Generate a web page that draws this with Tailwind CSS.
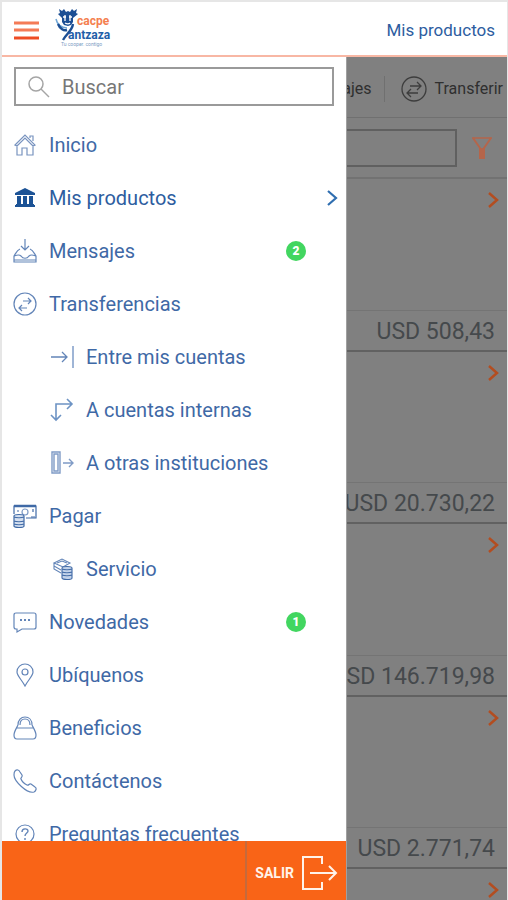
<!DOCTYPE html>
<html lang="es">

<head>
  <meta charset="utf-8">
  <meta name="viewport" content="width=device-width, initial-scale=1">
  <script src="https://cdn.jsdelivr.net/npm/@tailwindcss/browser@4"></script>
  <title>Mis productos</title>
</head>

<body class="font-[Roboto,sans-serif] bg-white">
  <div class="h-screen flex flex-col overflow-hidden border-t-2 border-l-2 border-r border-[#e6e6e6]">

    <header class="shrink-0 h-[55px] flex items-center justify-between pl-3 pr-3 border-b-2 border-[#f8b7a4]">
      <div class="flex items-center gap-4">
        <button type="button" aria-label="Menú" class="pt-1">
          <svg class="w-[25px] h-5" viewBox="0 0 25 20" fill="none" stroke-width="3">
            <path stroke="#f47b57" d="M0 2h25M0 9h25" />
            <path stroke="#ee4d25" d="M0 17h25" />
          </svg>
        </button>
        <svg class="w-[58px] h-10" viewBox="0 0 58 40" role="img" aria-label="CACPE Yantzaza">
          <path fill="#1c4f94" d="M4 0l3 2 2-2 2 3 2-1 2 1 2-3 2 2 3-2-1 4 2 1-5 4v4l-2 3-3 1-4-1-2-3V9L3 5l2-1z" />
          <path stroke="#fff" stroke-width="1.3" fill="none" d="M10 6v6M15 6v6M8 8h3M14 8h3M10 14c2 1 4 1 5 0" />
          <path stroke="#6fa5d5" stroke-width="1.5" fill="none" d="M1 10c1 5 5 9 11 9" />
          <path stroke="#1c4f94" stroke-width="2.4" fill="none" d="M18 15c-1 7-6 9-10 16M3 15c2 5 6 7 9 6" />
          <text x="22" y="16" font-size="12" font-weight="700" fill="#f4804f">cacpe</text>
          <text x="13" y="30" font-size="12" font-weight="700" fill="#1f5ea8">antzaza</text>
          <text x="6" y="37" font-size="5" fill="#7d9cc4">Tu cooper. contigo</text>
        </svg>
      </div>
      <h1 class="pt-1 text-[17px] text-[#2d5d9f]">Mis productos</h1>
    </header>

    <div class="relative flex-1 min-h-0 overflow-hidden">

      <!-- productos, detrás del menú -->
      <main class="h-full overflow-hidden bg-[#808080]">
        <div class="h-[61px] flex items-center justify-end pt-1 pr-1 text-base text-[#2f2f2f] border-b border-[#707070]">
          <a href="#" class="pr-3">Mensajes</a>
          <a href="#" class="flex items-center gap-2 pl-4 border-l border-[#707070]">
            <svg class="w-[26px] h-[26px]" viewBox="0 0 26 26" fill="none" stroke="#3d3d3d" stroke-width="1.3">
              <circle cx="13" cy="13" r="12" />
              <path d="M9 10h11M16 6l4 4-4 4M17 17H6M10 13l-4 4 4 4" />
            </svg>
            Transferir
          </a>
        </div>
        <div class="h-[61px] flex items-center gap-3 pl-3 pr-3 border-b-2 border-[#727272]">
          <input type="text" aria-label="Filtrar productos" class="flex-1 min-w-0 h-[38px] px-3 border-2 border-[#606060]">
          <button type="button" aria-label="Filtro" class="w-[26px] flex justify-center">
            <svg class="w-5 h-[22px]" viewBox="0 0 20 22" fill="none" stroke="#b5654a" stroke-width="2">
              <path d="M0 1h20" stroke-width="1.5" />
              <path d="M1 1l7 10v10h4V11l7-10" />
              <path d="M10 11v10" />
            </svg>
          </button>
        </div>

        <article class="h-[173px] flex flex-col justify-between border-b-2 border-[#616161]">
          <a href="#" aria-label="Ver cuenta" class="self-end pt-3 pr-2">
            <svg class="w-3 h-[18px]" viewBox="0 0 12 18" fill="none" stroke="#b34d20" stroke-width="2.5"><path d="M2 2l8 7-8 7" /></svg>
          </a>
          <p class="h-10 flex items-center justify-end pt-1 pr-3 border-t border-[#747474] text-[23px] text-[#45494c]">USD 508,43</p>
        </article>
        <article class="h-[172px] flex flex-col justify-between border-b-2 border-[#616161]">
          <a href="#" aria-label="Ver cuenta" class="self-end pt-3 pr-2">
            <svg class="w-3 h-[18px]" viewBox="0 0 12 18" fill="none" stroke="#b34d20" stroke-width="2.5"><path d="M2 2l8 7-8 7" /></svg>
          </a>
          <p class="h-10 flex items-center justify-end pt-1 pr-3 border-t border-[#747474] text-[23px] text-[#45494c]">USD 20.730,22</p>
        </article>
        <article class="h-[173px] flex flex-col justify-between border-b-2 border-[#616161]">
          <a href="#" aria-label="Ver cuenta" class="self-end pt-3 pr-2">
            <svg class="w-3 h-[18px]" viewBox="0 0 12 18" fill="none" stroke="#b34d20" stroke-width="2.5"><path d="M2 2l8 7-8 7" /></svg>
          </a>
          <p class="h-10 flex items-center justify-end pt-1 pr-3 border-t border-[#747474] text-[23px] text-[#45494c]">USD 146.719,98</p>
        </article>
        <article class="h-[172px] flex flex-col justify-between border-b-2 border-[#616161]">
          <a href="#" aria-label="Ver cuenta" class="self-end pt-3 pr-2">
            <svg class="w-3 h-[18px]" viewBox="0 0 12 18" fill="none" stroke="#b34d20" stroke-width="2.5"><path d="M2 2l8 7-8 7" /></svg>
          </a>
          <p class="h-10 flex items-center justify-end pt-1 pr-3 border-t border-[#747474] text-[23px] text-[#45494c]">USD 2.771,74</p>
        </article>
        <article class="h-[173px] flex flex-col">
          <a href="#" aria-label="Ver cuenta" class="self-end pt-3 pr-2">
            <svg class="w-3 h-[18px]" viewBox="0 0 12 18" fill="none" stroke="#b34d20" stroke-width="2.5"><path d="M2 2l8 7-8 7" /></svg>
          </a>
        </article>
      </main>

      <!-- menú lateral -->
      <aside class="absolute inset-y-0 left-0 w-[345px] max-w-full flex flex-col bg-white border-r border-[#a0a0a0]">
        <div class="shrink-0 px-3 pt-[10px] pb-3">
          <label class="h-[39px] flex items-center gap-3 pl-3 border-2 border-[#9a9a9a]">
            <svg class="w-[22px] h-[22px]" viewBox="0 0 22 22" fill="none" stroke="#a5a5a5" stroke-width="1.5">
              <circle cx="8" cy="8" r="7" />
              <path d="M13 13l8 8" />
            </svg>
            <input type="search" placeholder="Buscar" aria-label="Buscar" class="flex-1 min-w-0 text-xl outline-none placeholder:text-[#777]">
          </label>
        </div>

        <nav class="flex-1 min-h-0 overflow-hidden text-xl text-[#3f69a6]">
          <a href="#" class="h-[53px] flex items-center gap-3 pl-[11px]">
            <svg class="w-6 h-6" viewBox="0 0 24 24" fill="none" stroke="#7893bf" stroke-width="1.2">
              <path d="M2 12L12 2l10 10-2 1L12 5l-8 8zM4 13v9h5v-7h5v7h6v-9M17 5V3h3v5" />
            </svg>
            Inicio
          </a>
          <a href="#" class="h-[53px] flex items-center gap-3 pl-[11px] pr-2 text-[#2d5d9f]">
            <svg class="w-6 h-6" viewBox="0 0 24 24" fill="#1c5396">
              <path d="M12 2l10 5v2H2V7zM4 10h4v8H4zM10 10h4v8h-4zM16 10h4v8h-4zM3 18h18v1h1v2H2v-2h1z" />
            </svg>
            <span class="flex-1">Mis productos</span>
            <svg class="w-3 h-[18px]" viewBox="0 0 12 18" fill="none" stroke="#2f6eb0" stroke-width="2.2"><path d="M2 2l8 7-8 7" /></svg>
          </a>
          <a href="#" class="h-[53px] flex items-center gap-3 pl-[11px] pr-10">
            <svg class="w-6 h-6" viewBox="0 0 24 24" fill="none" stroke="#6385b8" stroke-width="1.2">
              <path d="M12 0v11M8 7l4 4 4-4M7 10c-3 1-4 4-6 7v6h22v-6c-2-3-3-6-6-7M1 17c3-1 5-2 7 0 2 3 6 3 8 0 2-2 4-1 7 0M1 21h22" />
            </svg>
            <span class="flex-1">Mensajes</span>
            <span class="w-5 h-5 flex items-center justify-center rounded-full bg-[#42d660] text-xs font-black text-white">2</span>
          </a>
          <a href="#" class="h-[53px] flex items-center gap-3 pl-[11px]">
            <svg class="w-6 h-6" viewBox="0 0 24 24" fill="none" stroke="#6385b8" stroke-width="1.2">
              <circle cx="12" cy="12" r="11" />
              <path d="M10 9h8M15 6l3 3-3 3M14 16H6M9 13l-3 3 3 3" />
            </svg>
            Transferencias
          </a>
          <a href="#" class="h-[53px] flex items-center gap-3 pl-12">
            <svg class="w-6 h-6" viewBox="0 0 24 24" fill="none" stroke="#6385b8" stroke-width="1.3">
              <path d="M1 12h16M12 7l5 5-5 5" />
              <path d="M23 1v22" stroke="#9fb5d6" stroke-width="2" />
            </svg>
            Entre mis cuentas
          </a>
          <a href="#" class="h-[53px] flex items-center gap-3 pl-12">
            <svg class="w-6 h-6" viewBox="0 0 24 24" fill="none" stroke="#6d93c4" stroke-width="1.6">
              <path d="M22 6H6v16M17 1l5 5-5 5M1 17l5 5 5-5" />
            </svg>
            A cuentas internas
          </a>
          <a href="#" class="h-[53px] flex items-center gap-3 pl-12">
            <svg class="w-6 h-6" viewBox="0 0 24 24" fill="none" stroke="#7f9bc6" stroke-width="1.4">
              <path d="M2 1h8v21H2zM4 3h4v17H4zM13 12h10M19 8l4 4-4 4" />
            </svg>
            A otras instituciones
          </a>
          <a href="#" class="h-[53px] flex items-center gap-3 pl-[11px]">
            <svg class="w-6 h-6" viewBox="0 0 24 24" fill="none" stroke="#3f69a6" stroke-width="1.2">
              <path d="M1 10V2h22v12H13" />
              <path d="M1 2h22" stroke-width="2.5" />
              <path d="M4 7h2M18 13h4M20 5v3" />
              <circle cx="12" cy="8" r="3" stroke="#7f9bc6" />
              <path fill="#d5e0f0" d="M1 12c0-2 10-2 10 0v10c0 2-10 2-10 0zM1 13c2 1 8 1 10 0M1 17c2 1 8 1 10 0M1 20c2 1 8 1 10 0" />
            </svg>
            Pagar
          </a>
          <a href="#" class="h-[53px] flex items-center gap-3 pl-12">
            <svg class="w-6 h-6" viewBox="0 0 24 24" fill="none" stroke="#6385b8" stroke-width="1.1">
              <path d="M4 6l8-4 8 4-7 4zM4 6v3l7 4M4 9v3l7 4M7 6l5-2 5 2" />
              <path fill="#c3d3ea" stroke="#3f69a6" d="M12 11c0-2 10-2 10 0v10c0 2-10 2-10 0zM12 12c2 1 8 1 10 0M12 15c2 1 8 1 10 0M12 18c2 1 8 1 10 0" />
            </svg>
            Servicio
          </a>
          <a href="#" class="h-[53px] flex items-center gap-3 pl-[11px] pr-10">
            <svg class="w-6 h-6" viewBox="0 0 24 24" fill="none" stroke="#6385b8" stroke-width="1.2">
              <path d="M3 3h18q2 0 2 2v12q0 2-2 2H9l-5 3v-3H3q-2 0-2-2V5q0-2 2-2z" />
              <path d="M7 10h2M11 10h2M15 10h2" stroke-width="2" />
            </svg>
            <span class="flex-1">Novedades</span>
            <span class="w-5 h-5 flex items-center justify-center rounded-full bg-[#42d660] text-xs font-black text-white">1</span>
          </a>
          <a href="#" class="h-[53px] flex items-center gap-3 pl-[11px]">
            <svg class="w-6 h-6" viewBox="0 0 24 24" fill="none" stroke="#6385b8" stroke-width="1.2">
              <path d="M12 23C9 17 4 13 4 9c0-5 4-8 8-8s8 3 8 8c0 4-5 8-8 14z" />
              <circle cx="12" cy="9" r="3" />
            </svg>
            Ubíquenos
          </a>
          <a href="#" class="h-[53px] flex items-center gap-3 pl-[11px]">
            <svg class="w-6 h-6" viewBox="0 0 24 24" fill="none" stroke="#6385b8" stroke-width="1.2">
              <path d="M5 9c-2 4-4 7-4 10 0 3 1 4 3 4h16c2 0 3-1 3-4 0-3-2-6-4-10M5 9c0-5 3-8 7-8s7 3 7 8M4 12h16M7 9c0-4 2-6 5-6s5 2 5 6" />
            </svg>
            Beneficios
          </a>
          <a href="#" class="h-[53px] flex items-center gap-3 pl-[11px]">
            <svg class="w-6 h-6" viewBox="0 0 24 24" fill="none" stroke="#6385b8" stroke-width="1.2">
              <path d="M2 2c2-2 4-1 5 1l2 3c1 2-2 3-1 4 1 3 4 5 6 6 2 1 2-2 4-1l4 3c2 1 1 4-1 5-7 2-20-11-20-17 0-2 0-3 1-4z" />
            </svg>
            Contáctenos
          </a>
          <a href="#" class="h-[53px] flex items-center gap-3 pl-[11px]">
            <svg class="w-6 h-6" viewBox="0 0 24 24" fill="none" stroke="#6385b8" stroke-width="1.2">
              <circle cx="12" cy="12" r="9" />
              <path d="M9 10c0-4 6-4 6-1 0 2-3 2-3 5M12 16v2" stroke-width="1.4" />
            </svg>
            Preguntas frecuentes
          </a>
        </nav>

        <div class="shrink-0 h-[59px] flex justify-end bg-[#f96417]">
          <button type="button" class="flex items-center gap-2 pl-2 pr-2 pt-1 border-l-2 border-[#c56a3c] text-sm font-bold text-[#fff3ea]">
            SALIR
            <svg class="w-9 h-[34px]" viewBox="0 0 36 34" fill="none" stroke="#fff3ea" stroke-width="2">
              <path d="M20 8V1H1v32h19v-7M8 17h26M27 10l7 7-7 7" />
            </svg>
          </button>
        </div>
      </aside>
    </div>
  </div>
</body>

</html>
